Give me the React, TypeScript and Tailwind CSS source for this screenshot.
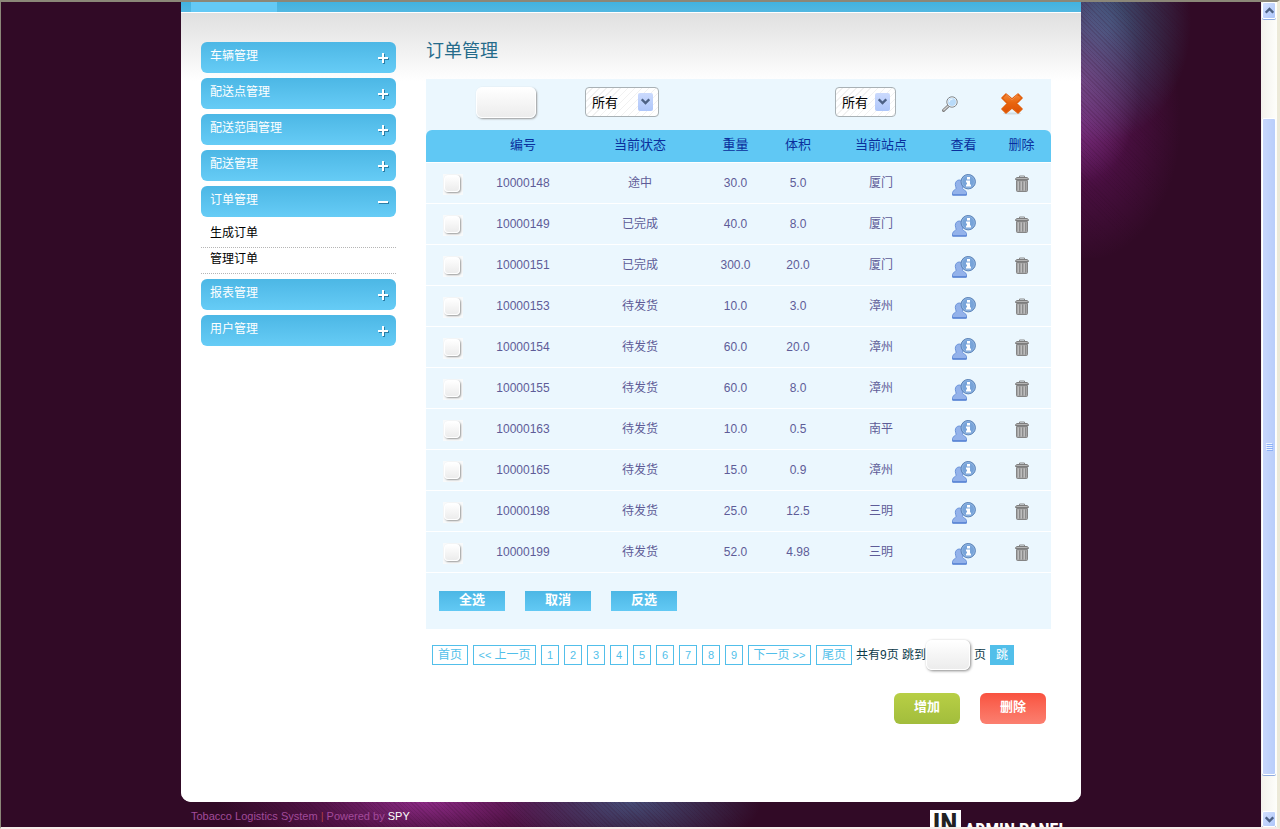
import { useState } from "react";

type Order = [id: string, status: string, weight: string, volume: string, station: string];

const ORDERS: Order[] = [
  ["10000148", "途中", "30.0", "5.0", "厦门"],
  ["10000149", "已完成", "40.0", "8.0", "厦门"],
  ["10000151", "已完成", "300.0", "20.0", "厦门"],
  ["10000153", "待发货", "10.0", "3.0", "漳州"],
  ["10000154", "待发货", "60.0", "20.0", "漳州"],
  ["10000155", "待发货", "60.0", "8.0", "漳州"],
  ["10000163", "待发货", "10.0", "0.5", "南平"],
  ["10000165", "待发货", "15.0", "0.9", "漳州"],
  ["10000198", "待发货", "25.0", "12.5", "三明"],
  ["10000199", "待发货", "52.0", "4.98", "三明"],
];

const MENU: { title: string; items?: string[] }[] = [
  { title: "车辆管理" },
  { title: "配送点管理" },
  { title: "配送范围管理" },
  { title: "配送管理" },
  { title: "订单管理", items: ["生成订单", "管理订单"] },
  { title: "报表管理" },
  { title: "用户管理" },
];

function SearchIcon() {
  return (
    <svg width="16" height="16" viewBox="0 0 16 16" aria-hidden="true">
      <path d="M1.6 14.4 6.4 9.8" stroke="#7c7c7c" strokeWidth="3" strokeLinecap="round" />
      <path d="M1.8 14 6.2 9.9" stroke="#d4d4d4" strokeWidth="1.4" strokeLinecap="round" />
      <circle cx="10" cy="6" r="5.2" fill="#fff" stroke="#7d858a" strokeWidth="1" />
      <circle cx="10" cy="6" r="4" fill="#b9dbf9" />
      <path d="M7.2 6.2A3 3 0 0 1 10.6 3.1" stroke="#e9f6ff" strokeWidth="1.2" fill="none" />
    </svg>
  );
}

function CrossIcon() {
  return (
    <svg width="22" height="22" viewBox="0 0 22 22" aria-hidden="true">
      <defs>
        <linearGradient id="cross" x1="0" y1="0" x2="0" y2="1">
          <stop offset="0" stopColor="#f48a3a" />
          <stop offset=".45" stopColor="#e9660f" />
          <stop offset="1" stopColor="#dd4f04" />
        </linearGradient>
      </defs>
      <ellipse cx="11" cy="20.5" rx="9" ry="1" fill="#cfdde4" />
      <path
        d="M5 1 11 6 17 1 21 5 15.500 10.500 21 16 17 20 11 15 5 20 1 16 6.500 10.500 1 5Z"
        fill="url(#cross)"
        stroke="#e1600e"
        strokeWidth="1.600"
        strokeLinejoin="round"
      />
      <path d="M5 1.500 11 6.700 17 1.500" fill="none" stroke="#f7985a" strokeWidth=".8" />
    </svg>
  );
}

function UserInfoIcon() {
  return (
    <svg width="24" height="22" viewBox="0 0 24 22" aria-hidden="true">
      <path
        d="M.5 21v-2.500c0-1.700 3.200-2.800 3.700-4.200C3.900 13 3.300 12 3.300 10.300c0-2.500 1.700-4.300 4-4.300s4.200 1.800 4.200 4.300c0 1.700-.8 2.700-1.100 4 .5 1.400 4.100 2.500 4.100 4.200v2.500Z"
        fill="#93b2ea"
        stroke="#6c94da"
      />
      <path d="M.5 21h14" stroke="#4a79d0" strokeWidth="1.200" />
      <circle cx="16.200" cy="7.700" r="7.200" fill="#78a4d9" stroke="#5b82b6" />
      <circle cx="16.200" cy="7.700" r="6.200" fill="none" stroke="#9dc0e8" strokeWidth=".6" />
      <path d="M15 3h3v2.500h-3ZM14 6.500h4v4h1v2h-5v-2h1v-2h-1Z" fill="#fff" />
    </svg>
  );
}

function TrashIcon() {
  return (
    <svg width="14" height="17" viewBox="0 0 14 17" aria-hidden="true">
      <path d="M4.500 2.500V1h5v1.500" fill="none" stroke="#8a8a8a" />
      <path d="M.5 4.500c0-1.500 1-2 2.500-2h8c1.500 0 2.500.5 2.500 2Z" fill="#b5b5b5" stroke="#7d7d7d" />
      <path d="M1.500 5.500h11v10c0 .600-.4 1-1 1h-9c-.6 0-1-.4-1-1Z" fill="#a6a6a6" stroke="#858585" />
      <path d="M3.500 6.500v9M6.500 6.500v9M9.500 6.500v9" stroke="#bdbdbd" />
      <path d="M4.500 6.500v9M7.500 6.500v9M10.500 6.500v9" stroke="#8b8b8b" />
    </svg>
  );
}

function Chevron({ up = false }: { up?: boolean }) {
  return (
    <svg width="9" height="7" viewBox="0 0 9 7" aria-hidden="true">
      <path d={up ? "M.7 5.700 4.500 2 8.300 5.700" : "M.7 1.300 4.500 5 8.300 1.300"} fill="none" stroke="#4d6185" strokeWidth="2.400" />
    </svg>
  );
}

function ToggleIcon({ open }: { open: boolean }) {
  return (
    <svg width="12" height="12" viewBox="0 0 12 12" aria-hidden="true">
      <path d={open ? "M1 7h10" : "M1 7h10M6 2v10"} stroke="#2b7ea6" strokeWidth="2" />
      <path d={open ? "M0 6h10" : "M0 6h10M5 1v10"} stroke="#fff" strokeWidth="2" />
    </svg>
  );
}

function Picker({ label, className }: { label: string; className: string }) {
  return (
    <div className={`relative ${className}`}>
      <select
        aria-label={label}
        className="block h-[30px] w-full appearance-none rounded border border-[#a9b1b5] bg-[repeating-linear-gradient(135deg,#fff_0px,#fff_4px,#f1f1f1_4px,#f1f1f1_5px)] pt-0.5 pl-1.5 text-[13px] text-black"
      >
        <option>所有</option>
      </select>
      <span className="pointer-events-none absolute top-1.5 right-1.5 flex h-[18px] w-[15px] items-center justify-center rounded-xs bg-linear-to-b from-[#cbdafd] to-[#aec6fa]">
        <Chevron />
      </span>
    </div>
  );
}

function Sidebar() {
  const [open, setOpen] = useState("订单管理");
  return (
    <nav className="flex w-[195px] shrink-0 flex-col gap-[5px] text-xs">
      {MENU.map(({ title, items }) => (
        <div key={title}>
          <button
            type="button"
            onClick={() => setOpen(open === title ? "" : title)}
            className="flex h-[31px] w-full items-center justify-between rounded-md bg-linear-to-b from-[#4cb7e5] to-[#66ccf6] pr-1.5 pl-[9px] text-white"
          >
            <span className="pb-1">{title}</span>
            <ToggleIcon open={open === title} />
          </button>
          {items && open === title && (
            <ul className="pt-[5px]">
              {items.map((item) => (
                <li key={item} className="border-b border-dotted border-[#b5b5b5]">
                  <a href="#" className="flex h-[25px] items-center px-[9px] pb-1 text-black">
                    {item}
                  </a>
                </li>
              ))}
            </ul>
          )}
        </div>
      ))}
    </nav>
  );
}

function OrderTable() {
  const [picked, setPicked] = useState<string[]>([]);
  const toggle = (id: string) =>
    setPicked((p) => (p.includes(id) ? p.filter((x) => x !== id) : [...p, id]));
  const action =
    "h-5 w-[66px] bg-linear-to-b from-[#4cb7e5] to-[#62c9f4] pb-0.5 text-[13px] leading-[18px] font-bold text-white";
  return (
    <div className="bg-[#ebf7fe]">
      <table className="w-full table-fixed border-separate border-spacing-0 text-center text-xs text-[#5e5c98]">
        <colgroup>
          <col className="w-[42px]" />
          <col className="w-[110px]" />
          <col className="w-[124px]" />
          <col className="w-[67px]" />
          <col className="w-[58px]" />
          <col className="w-[108px]" />
          <col className="w-[57px]" />
          <col className="w-[59px]" />
        </colgroup>
        <thead>
          <tr className="h-[51px]">
            <td />
            <td className="pb-1 pl-2 text-left">
              <input
                aria-label="编号"
                className="block h-[31px] w-[60px] rounded-md border border-white bg-linear-to-b from-white to-[#ececec] px-1.5 text-[13px] shadow-[1px_1px_2px_#999]"
              />
            </td>
            <td className="pb-1.5 pl-[7px] text-left">
              <Picker label="当前状态" className="w-[74px]" />
            </td>
            <td />
            <td />
            <td className="pb-1.5 pl-2 text-left">
              <Picker label="当前站点" className="w-[61px]" />
            </td>
            <td className="pb-0.5 pl-[7px] text-left">
              <button type="button" aria-label="搜索" className="block">
                <SearchIcon />
              </button>
            </td>
            <td className="pb-0.5 pl-[9px] text-left">
              <button type="button" aria-label="清除" className="block">
                <CrossIcon />
              </button>
            </td>
          </tr>
          <tr className="h-[33px] text-[13px] text-[#0a2f9c] *:border-b *:border-white *:bg-[#60c8f4] *:pb-[3px] *:font-normal">
            <th className="rounded-tl-md" />
            <th>编号</th>
            <th>当前状态</th>
            <th>重量</th>
            <th>体积</th>
            <th>当前站点</th>
            <th>查看</th>
            <th className="rounded-tr-md">删除</th>
          </tr>
        </thead>
        <tbody>
          {ORDERS.map(([id, status, weight, volume, station]) => (
            <tr key={id} className="h-[41px] *:border-b *:border-white">
              <td className="pt-[3px] pl-[17px]">
                <span className="flex h-[21px] w-5 bg-[#f8fafb] p-px">
                  <input
                    type="checkbox"
                    aria-label={id}
                    checked={picked.includes(id)}
                    onChange={() => toggle(id)}
                    className="block h-[17px] w-4 appearance-none rounded border border-white bg-linear-to-b from-white to-[#ececec] shadow-[1px_1px_2px_#999] checked:to-[#66ccf6]"
                  />
                </span>
              </td>
              <td>{id}</td>
              <td>{status}</td>
              <td>{weight}</td>
              <td>{volume}</td>
              <td>{station}</td>
              <td className="pt-[3px]">
                <button type="button" aria-label={`查看 ${id}`} className="mx-auto block">
                  <UserInfoIcon />
                </button>
              </td>
              <td>
                <button type="button" aria-label={`删除 ${id}`} className="mx-auto block">
                  <TrashIcon />
                </button>
              </td>
            </tr>
          ))}
        </tbody>
      </table>
      <div className="flex gap-5 px-[13px] py-[18px]">
        <button type="button" className={action} onClick={() => setPicked(ORDERS.map((o) => o[0]))}>
          全选
        </button>
        <button type="button" className={action} onClick={() => setPicked([])}>
          取消
        </button>
        <button
          type="button"
          className={action}
          onClick={() => setPicked(ORDERS.map((o) => o[0]).filter((id) => !picked.includes(id)))}
        >
          反选
        </button>
      </div>
    </div>
  );
}

function Pager() {
  const box =
    "flex h-5 items-center justify-center border border-[#52bfea] whitespace-nowrap text-[#52bfea]";
  return (
    <div className="mt-2.5 flex h-8 items-center pl-1.5 text-xs text-[#0d3b4a]">
      <div className="flex gap-[5px]">
        <a href="#" className={`${box} w-9`}>首页</a>
        <a href="#" className={`${box} w-[63px]`}><span className="text-[11px]">&lt;&lt;&nbsp;</span>上一页</a>
        {[1, 2, 3, 4, 5, 6, 7, 8, 9].map((n) => (
          <a key={n} href="#" className={`${box} w-[18px] text-[11px]`}>{n}</a>
        ))}
        <a href="#" className={`${box} w-[63px]`}>下一页<span className="text-[11px]">&nbsp;&gt;&gt;</span></a>
        <a href="#" className={`${box} w-9`}>尾页</a>
      </div>
      <label htmlFor="page" className="ml-1 whitespace-nowrap">共有9页 跳到</label>
      <input
        id="page"
        className="h-[30px] w-11 rounded-md border border-white bg-linear-to-b from-white to-[#ececec] px-1.5 shadow-[1px_1px_3px_#888]"
      />
      <span className="ml-1">页</span>
      <button type="button" className="ml-1 h-5 bg-[#52bfea] px-1.5 leading-5 text-white">跳</button>
    </div>
  );
}

function Scrollbar() {
  const knob =
    "mx-px flex shrink-0 items-center justify-center rounded-xs border border-white bg-linear-to-br from-[#d3e0fe] to-[#aec6fa] shadow-[0_1px_0_#8fabdf]";
  return (
    <div className="flex w-4 shrink-0 flex-col bg-linear-to-r from-[#f3f1ec] to-[#fefefb]" aria-hidden="true">
      <div className={`${knob} h-[17px]`}><Chevron up /></div>
      <div className="grow-100" />
      <div className="mx-px flex grow-655 flex-col items-center justify-center gap-px rounded-xs border border-white bg-linear-to-r from-[#c8d6fb] to-[#b9cefb] shadow-[0_1px_0_#8fabdf]">
        <i className="h-px w-1.5 bg-[#eef4fe] shadow-[1px_1px_0_#8cb0f8]" />
        <i className="h-px w-1.5 bg-[#eef4fe] shadow-[1px_1px_0_#8cb0f8]" />
        <i className="h-px w-1.5 bg-[#eef4fe] shadow-[1px_1px_0_#8cb0f8]" />
        <i className="h-px w-1.5 bg-[#eef4fe] shadow-[1px_1px_0_#8cb0f8]" />
      </div>
      <div className="grow-36" />
      <div className={`${knob} h-4`}><Chevron /></div>
    </div>
  );
}

export default function App() {
  return (
    <div className="flex h-screen overflow-hidden border-t-2 border-r-3 border-b-2 border-l border-t-[#8b8778] border-r-[#ece9d8] border-b-[#f6ebe8] border-l-[#8b8778] font-['Liberation_Sans','Noto_Sans_CJK_SC',sans-serif]">
      <div className="min-w-0 grow overflow-hidden bg-[#310a26]">
        <div className="relative mx-auto w-[900px]">
          <div className="pointer-events-none absolute top-0 left-full h-64 w-40 bg-[repeating-linear-gradient(45deg,#310a2626_0px,#310a2626_1px,transparent_1px,transparent_3px),radial-gradient(60px_100px_at_0px_80px,#8a559a99,transparent),radial-gradient(90px_120px_at_20px_20px,#3f5478_10%,#3f547880_50%,transparent),radial-gradient(100px_140px_at_0px_120px,#6d176c,#5c135680_50%,transparent)]" />
          <div className="overflow-hidden rounded-b-[10px] bg-white">
            <div className="h-2.5 bg-linear-to-b from-[#41b2e0] to-[#52b7e1] px-2.5">
              <div className="h-full w-[86px] bg-[#64c9f5]" />
            </div>
            <div className="mt-px flex items-start gap-[30px] bg-linear-to-b from-[#e0e0e0] to-white to-[68px] px-5 pt-[29px] pb-[78px]">
              <Sidebar />
              <main className="w-[625px] min-w-0">
                <h1 className="h-[37px] text-lg leading-[18px] text-[#256b8b]">订单管理</h1>
                <OrderTable />
                <Pager />
                <div className="mt-[22px] flex justify-end gap-5 pr-[5px] text-[13px] font-bold text-white">
                  <button type="button" className="h-[31px] w-[66px] rounded-md bg-linear-to-b from-[#b8cf45] to-[#a2bd3c] pb-1">
                    增加
                  </button>
                  <button type="button" className="h-[31px] w-[66px] rounded-md bg-linear-to-b from-[#f9523f] to-[#fb7f70] pb-1">
                    删除
                  </button>
                </div>
              </main>
            </div>
          </div>
          <footer className="flex h-16 items-start justify-between bg-[repeating-linear-gradient(45deg,#310a2626_0px,#310a2626_1px,transparent_1px,transparent_3px),radial-gradient(130px_55px_at_450px_0px,#4b5c8acc,transparent),radial-gradient(210px_60px_at_245px_0px,#8c2a85,#6a195f99_50%,transparent)] px-2.5 pt-2">
            <p className="text-[11px] leading-3 text-[#a24a9a]">
              Tobacco Logistics System <span className="text-[#b04040]">|</span> Powered by{" "}
              <a href="#" className="text-white">SPY</a>
            </p>
            <div className="mr-1 flex items-start gap-1 font-['Liberation_Sans_Narrow','Roboto_Condensed','Liberation_Sans']">
              <span className="flex w-[31px] justify-center bg-white text-[28px] leading-7 font-bold text-[#222]">IN</span>
              <span className="pt-2.5 text-lg leading-5 font-bold text-white">
                ADMIN PANEL
              </span>
            </div>
          </footer>
        </div>
      </div>
      <Scrollbar />
    </div>
  );
}
